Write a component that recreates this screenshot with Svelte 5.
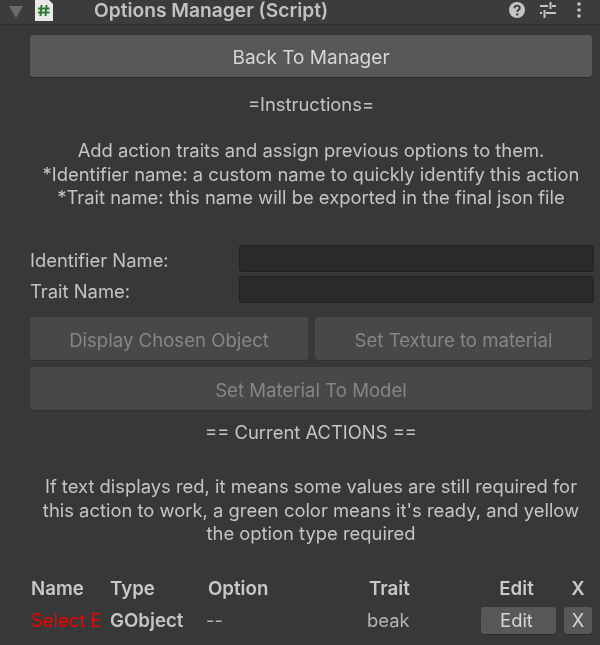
<script>
  const instructions = [
    'Add action traits and assign previous options to them.',
    '*Identifier name: a custom name to quickly identify this action',
    '*Trait name: this name will be exported in the final json file'
  ];
  const note = [
    'If text displays red, it means some values are still required for',
    'this action to work, a green color means it\'s ready, and yellow',
    'the option type required'
  ];
</script>

<div class="panel">
  <header class="titlebar">
    <svg class="caret" width="14" height="12" viewBox="0 0 14 12"><path d="M0 0h14l-7 12z" fill="#6a6a6a"/></svg>
    <svg class="file" width="20" height="21" viewBox="0 0 20 21">
      <path d="M1 0h14l4 4v17H1z" fill="#e9e9e9"/>
      <path d="M7.500 5 6.500 16M12.500 5l-1 11M4 8.500h11.500M4 12.500h11.500" stroke="#2f7a35" stroke-width="2" fill="none"/>
    </svg>
    <span class="title">Options Manager (Script)</span>
    <svg class="help" width="16" height="16" viewBox="0 0 16 16">
      <circle cx="8" cy="8" r="8" fill="#c4c4c4"/>
      <path d="M5.400 6.200c0-3.400 5.400-3.400 5.400-.1 0 2-2.600 1.900-2.600 4" stroke="#3c3c3c" stroke-width="1.900" fill="none"/>
      <circle cx="8.200" cy="12.400" r="1.200" fill="#3c3c3c"/>
    </svg>
    <svg class="sliders" width="16" height="16" viewBox="0 0 16 16">
      <path d="M0 4h8M12 4h4M10.500 0v7M0 11h2M6 11h10M4.500 8v8" stroke="#c4c4c4" stroke-width="2" fill="none"/>
    </svg>
    <svg class="dots" width="4" height="16" viewBox="0 0 4 16">
      <circle cx="2" cy="2" r="1.800" fill="#c4c4c4"/><circle cx="2" cy="8" r="1.800" fill="#c4c4c4"/><circle cx="2" cy="14" r="1.800" fill="#c4c4c4"/>
    </svg>
  </header>

  <main class="body">
    <button class="btn back">Back To Manager</button>

    <div class="text first">
      <div>=Instructions=</div>
      <div class="blank"></div>
      {#each instructions as line}<div>{line}</div>{/each}
    </div>

    <div class="fields">
      <label class="field"><span>Identifier Name:</span><input /></label>
      <label class="field"><span>Trait Name:</span><input /></label>
    </div>

    <div class="actions">
      <div class="pair">
        <button class="btn off">Display Chosen Object</button>
        <button class="btn off">Set Texture to material</button>
      </div>
      <button class="btn off wide">Set Material To Model</button>
    </div>

    <div class="text second">
      <div>== Current ACTIONS ==</div>
      <div class="gap"></div>
      {#each note as line}<div>{line}</div>{/each}
    </div>

    <div class="table">
      <div class="row head">
        <span class="c-name">Name</span>
        <span class="c-type">Type</span>
        <span class="c-option">Option</span>
        <span class="c-trait">Trait</span>
        <span class="c-edit">Edit</span>
        <span class="c-x">X</span>
      </div>
      <div class="row item">
        <span class="c-name red">Select E</span>
        <span class="c-type strong">GObject</span>
        <span class="c-option dim shift">--</span>
        <span class="c-trait dim shift">beak</span>
        <button class="btn c-edit small">Edit</button>
        <button class="btn c-x small">X</button>
      </div>
    </div>
  </main>
</div>

<style>
  :global(body) {
    margin: 0;
    background: #383838;
  }
  .panel {
    width: 600px;
    height: 645px;
    overflow: hidden;
    background: #383838;
    color: #c4c4c4;
    font-family: Inter, "Liberation Sans", sans-serif;
    font-size: 18.400px;
    filter: blur(0.55px);
  }
  .titlebar {
    height: 25px;
    box-sizing: border-box;
    background: #3c3c3c;
    border-bottom: 1px solid #303030;
    display: flex;
    align-items: center;
  }
  .caret { margin: 0 0 0 9px; }
  .file { margin: -3px 0 0 11px; }
  .title {
    margin: 0 0 3px 40px;
    font-weight: 600;
    font-size: 19.200px;
    line-height: 1;
    color: #c2c2c2;
    flex: 1;
    white-space: nowrap;
  }
  .help { margin: -5px 0 0 0; }
  .sliders { margin: -5px 0 0 15px; }
  .dots { margin: -5px 19px 0 21px; }
  .body {
    padding: 10px 8px 0 30px;
    display: flex;
    flex-direction: column;
  }
  .btn {
    font: inherit;
    color: #d6d6d6;
    background: #585858;
    border: 0;
    border-radius: 3px;
    box-shadow: 0 1px 0 #2a2a2a;
    padding: 0;
    white-space: nowrap;
  }
  .back { height: 42px; padding-top: 2px; font-size: 19.050px; }
  .text {
    text-align: center;
    line-height: 23.400px;
    white-space: nowrap;
    color: #c4c4c4;
  }
  .blank { height: 23.400px; }
  .gap { height: 31.400px; }
  .first { margin-top: 15.500px; }
  .fields {
    margin-top: 35.500px;
    display: flex;
    flex-direction: column;
    gap: 4px;
    margin-right: -2px;
  }
  .field {
    display: flex;
    align-items: center;
    height: 27px;
  }
  .field span { width: 209px; flex: none; padding-top: 2px; }
  .field input {
    flex: 1;
    min-width: 0;
    height: 27px;
    box-sizing: border-box;
    background: #2a2a2a;
    border: 1px solid #212121;
    border-radius: 3px;
    padding: 0;
  }
  .actions {
    margin-top: 14px;
    display: flex;
    flex-direction: column;
    gap: 7px;
  }
  .pair {
    display: grid;
    grid-template-columns: 278px 277px;
    gap: 7px;
  }
  .off {
    height: 43px;
    background: #484848;
    color: #868686;
    box-shadow: 0 1px 0 #303030;
    font-size: 18.600px;
    padding-top: 3px;
  }
  .second { margin-top: 10.500px; }
  .table { margin-top: 31px; margin-left: 1px; }
  .row {
    display: grid;
    grid-template-columns: 79px 98px 161px 112px 75px 8px 28px;
    align-items: center;
    font-size: 18.700px;
  }
  .head { height: 24px; font-weight: 600; color: #c8c8c8; }
  .item { height: 27px; margin-top: 6px; }
  .c-name { grid-column: 1; overflow: hidden; width: 68px; white-space: nowrap; }
  .c-type { grid-column: 2; }
  .c-option { grid-column: 3; }
  .c-trait { grid-column: 4; }
  .c-edit { grid-column: 5; text-align: center; padding-right: 4px; }
  .c-x { grid-column: 7; text-align: center; }
  .red { color: #f40000; font-size: 18.400px; }
  .strong { font-weight: 600; }
  .dim { color: #b4b4b4; font-size: 18.400px; }
  .shift { margin-left: -2px; }
  .small { height: 27px; background: #585858; font-size: 18.400px; }
</style>
